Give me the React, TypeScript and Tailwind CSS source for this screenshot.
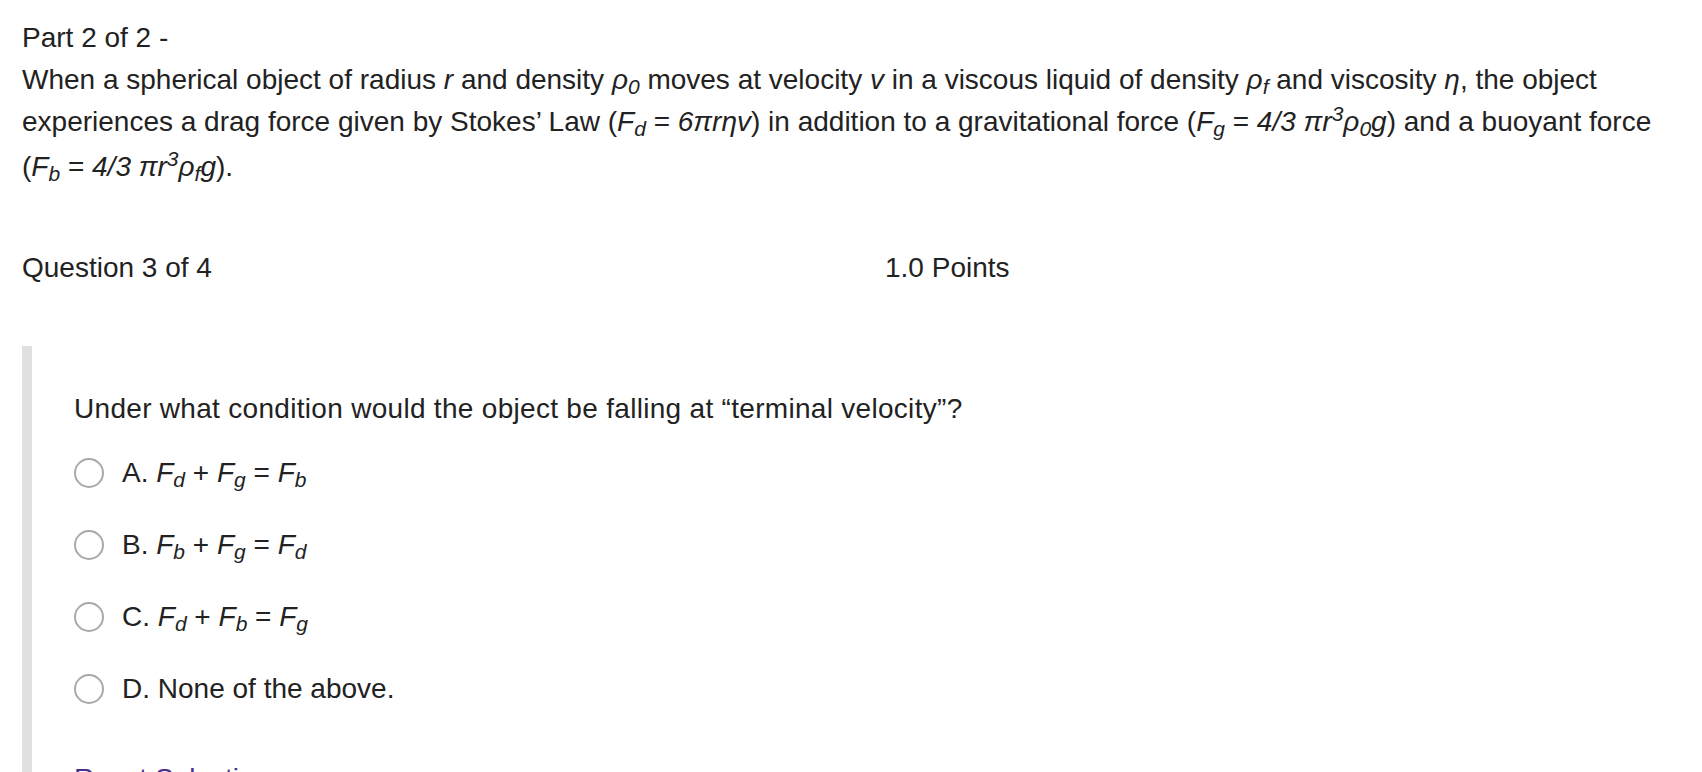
import React from "react"

// F with an italic subscript, as in F_d, F_g, F_b
function F({ s }: { s: string }) {
  return (
    <i>
      F<sub>{s}</sub>
    </i>
  )
}

function Rho({ s }: { s: string }) {
  return (
    <i>
      ρ<sub>{s}</sub>
    </i>
  )
}

const OPTIONS: { key: string; body: React.ReactNode }[] = [
  {
    key: "A",
    body: (
      <>
        <F s="d" /> + <F s="g" /> = <F s="b" />
      </>
    ),
  },
  {
    key: "B",
    body: (
      <>
        <F s="b" /> + <F s="g" /> = <F s="d" />
      </>
    ),
  },
  {
    key: "C",
    body: (
      <>
        <F s="d" /> + <F s="b" /> = <F s="g" />
      </>
    ),
  },
  { key: "D", body: <>None of the above.</> },
]

export default function App() {
  return (
    <div className="min-h-screen bg-white px-[22px] pt-[17px] font-['Liberation_Sans',Arial,sans-serif] text-[28px] leading-[42px] text-[#222]">
      <p>Part 2 of 2 -</p>
      <p>
        When a spherical object of radius <i>r</i> and density <Rho s="0" /> moves at velocity <i>v</i> in a viscous
        liquid of density <Rho s="f" /> and viscosity <i>η</i>, the object
        <br />
        experiences a drag force given by Stokes’ Law (<F s="d" /> = <i>6πrηv</i>) in addition to a gravitational
        force (<F s="g" /> = <i>4/3 πr<sup>3</sup>ρ<sub>0</sub>g</i>) and a buoyant force
        <br />
        <span className="inline-block pt-[3px]">
          (<F s="b" /> = <i>4/3 πr<sup>3</sup>ρ<sub>f</sub>g</i>).
        </span>
      </p>

      <div className="mt-[59px] flex">
        <div className="w-[863px]">Question 3 of 4</div>
        <div>1.0 Points</div>
      </div>

      <div className="mt-[57px] border-l-[10px] border-[#e0e0e0] pl-[42px] pt-[42px] pb-10">
        <p className="tracking-[0.3px]">Under what condition would the object be falling at “terminal velocity”?</p>

        <div className="mt-[22px] flex flex-col gap-[30px]">
          {OPTIONS.map((o) => (
            <label key={o.key} className="flex items-center gap-[18px] cursor-pointer">
              <span className="h-[30px] w-[30px] shrink-0 rounded-full border-2 border-[#a9a9a9] bg-white" />
              <span>
                {o.key}. {o.body}
              </span>
            </label>
          ))}
        </div>

        <a href="#" className="mt-[48px] block text-[#4b2e8a]">
          Reset Selection
        </a>
      </div>
    </div>
  )
}
